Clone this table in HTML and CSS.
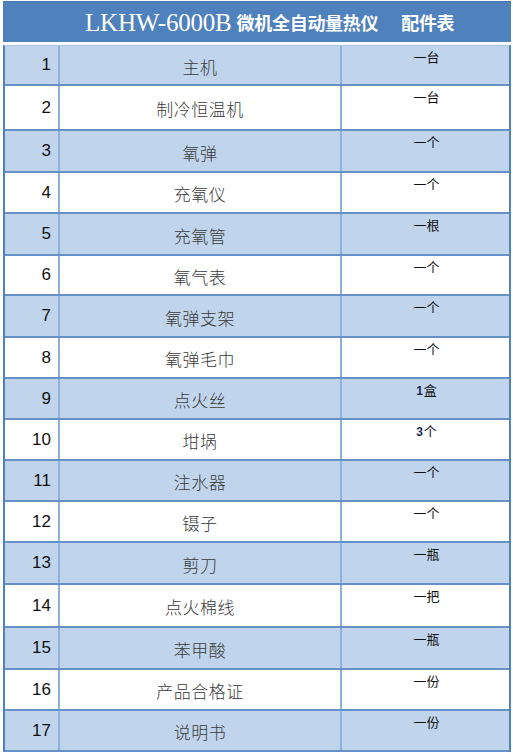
FILE: index.html
```html
<!DOCTYPE html>
<html lang="zh">
<head>
<meta charset="utf-8">
<title>LKHW-6000B 配件表</title>
<link rel="stylesheet" href="styles.css">
</head>
<body>
<div class="sheet">
  <div class="title">
    <span class="model">LKHW-6000B</span>
    <span class="name">微机全自动量热仪</span>
    <span class="name list">配件表</span>
  </div>
  <div class="table">
    <div class="row alt h40"><div class="no">1</div><div class="item">主机</div><div class="qty">一台</div></div>
    <div class="row h45"><div class="no">2</div><div class="item">制冷恒温机</div><div class="qty">一台</div></div>
    <div class="row alt h42"><div class="no">3</div><div class="item">氧弹</div><div class="qty">一个</div></div>
    <div class="row"><div class="no">4</div><div class="item">充氧仪</div><div class="qty">一个</div></div>
    <div class="row alt h42"><div class="no">5</div><div class="item">充氧管</div><div class="qty">一根</div></div>
    <div class="row h40"><div class="no">6</div><div class="item">氧气表</div><div class="qty">一个</div></div>
    <div class="row alt h42"><div class="no">7</div><div class="item">氧弹支架</div><div class="qty">一个</div></div>
    <div class="row"><div class="no">8</div><div class="item">氧弹毛巾</div><div class="qty">一个</div></div>
    <div class="row alt"><div class="no">9</div><div class="item">点火丝</div><div class="qty"><span class="num">1</span>盒</div></div>
    <div class="row"><div class="no">10</div><div class="item">坩埚</div><div class="qty"><span class="num">3</span>个</div></div>
    <div class="row alt"><div class="no">11</div><div class="item">注水器</div><div class="qty">一个</div></div>
    <div class="row"><div class="no">12</div><div class="item">镊子</div><div class="qty">一个</div></div>
    <div class="row alt h42"><div class="no">13</div><div class="item">剪刀</div><div class="qty">一瓶</div></div>
    <div class="row h43"><div class="no">14</div><div class="item">点火棉线</div><div class="qty">一把</div></div>
    <div class="row alt h42"><div class="no">15</div><div class="item">苯甲酸</div><div class="qty">一瓶</div></div>
    <div class="row"><div class="no">16</div><div class="item">产品合格证</div><div class="qty">一份</div></div>
    <div class="row alt"><div class="no">17</div><div class="item">说明书</div><div class="qty">一份</div></div>
  </div>
</div>
</body>
</html>
```

FILE: styles.css
```css
html, body {
  margin: 0;
  padding: 0;
  background: #ffffff;
}

.sheet {
  width: 508px;
  margin: 1px 0 0 3px;
}

.title {
  height: 41px;
  background: #4f81bd;
  border-top: 1px solid #4673ad;
  box-sizing: border-box;
  display: flex;
  align-items: center;
  padding-left: 82px;
  color: #ffffff;
  white-space: nowrap;
}

.model {
  font-family: "Liberation Serif", "DejaVu Serif", serif;
  font-size: 25px;
  letter-spacing: -0.2px;
  font-weight: normal;
  margin-right: 5px;
  margin-top: 2px;
}

.name {
  font-family: "Noto Sans CJK SC", "Noto Sans", sans-serif;
  font-weight: 700;
  font-size: 18px;
  letter-spacing: -0.3px;
  line-height: 1;
}

.name.list {
  margin-left: 23px;
}

.table {
  margin-top: 3px;
  border-left: 2px solid #4f81bd;
  border-right: 2px solid #4f81bd;
  border-top: 1px solid #a9c2e3;
}

.row {
  display: grid;
  grid-template-columns: 55px 282px 167px;
  height: 41px;
  box-sizing: border-box;
  border-bottom: 2px solid #6790c8;
  background: #ffffff;
}

.row.alt {
  background: #c0d4ec;
}

.row.h40 { height: 40px; }
.row.h42 { height: 42px; }
.row.h43 { height: 43px; }
.row.h45 { height: 45px; }

.no {
  font-family: "Liberation Sans", "Open Sans", sans-serif;
  font-size: 17px;
  color: #111111;
  display: flex;
  align-items: center;
  justify-content: flex-end;
  padding-right: 7px;
  border-right: 2px solid #8db0dc;
}

.item {
  font-family: "Noto Sans CJK SC", "Noto Sans", sans-serif;
  font-size: 17px;
  font-weight: 300;
  color: #3a3a3a;
  display: flex;
  align-items: center;
  justify-content: center;
  padding-top: 2px;
  letter-spacing: 0.5px;
  border-right: 2px solid #8db0dc;
}

.qty {
  font-family: "Noto Sans CJK SC", "Noto Sans", sans-serif;
  font-size: 13px;
  line-height: 16px;
  color: #111111;
  text-align: center;
  padding-top: 3px;
  padding-left: 2px;
}

.num {
  font-family: "Liberation Sans", "Open Sans", sans-serif;
  font-weight: 700;
  font-size: 12px;
  color: #1a2a55;
  margin-right: 1px;
}
```
